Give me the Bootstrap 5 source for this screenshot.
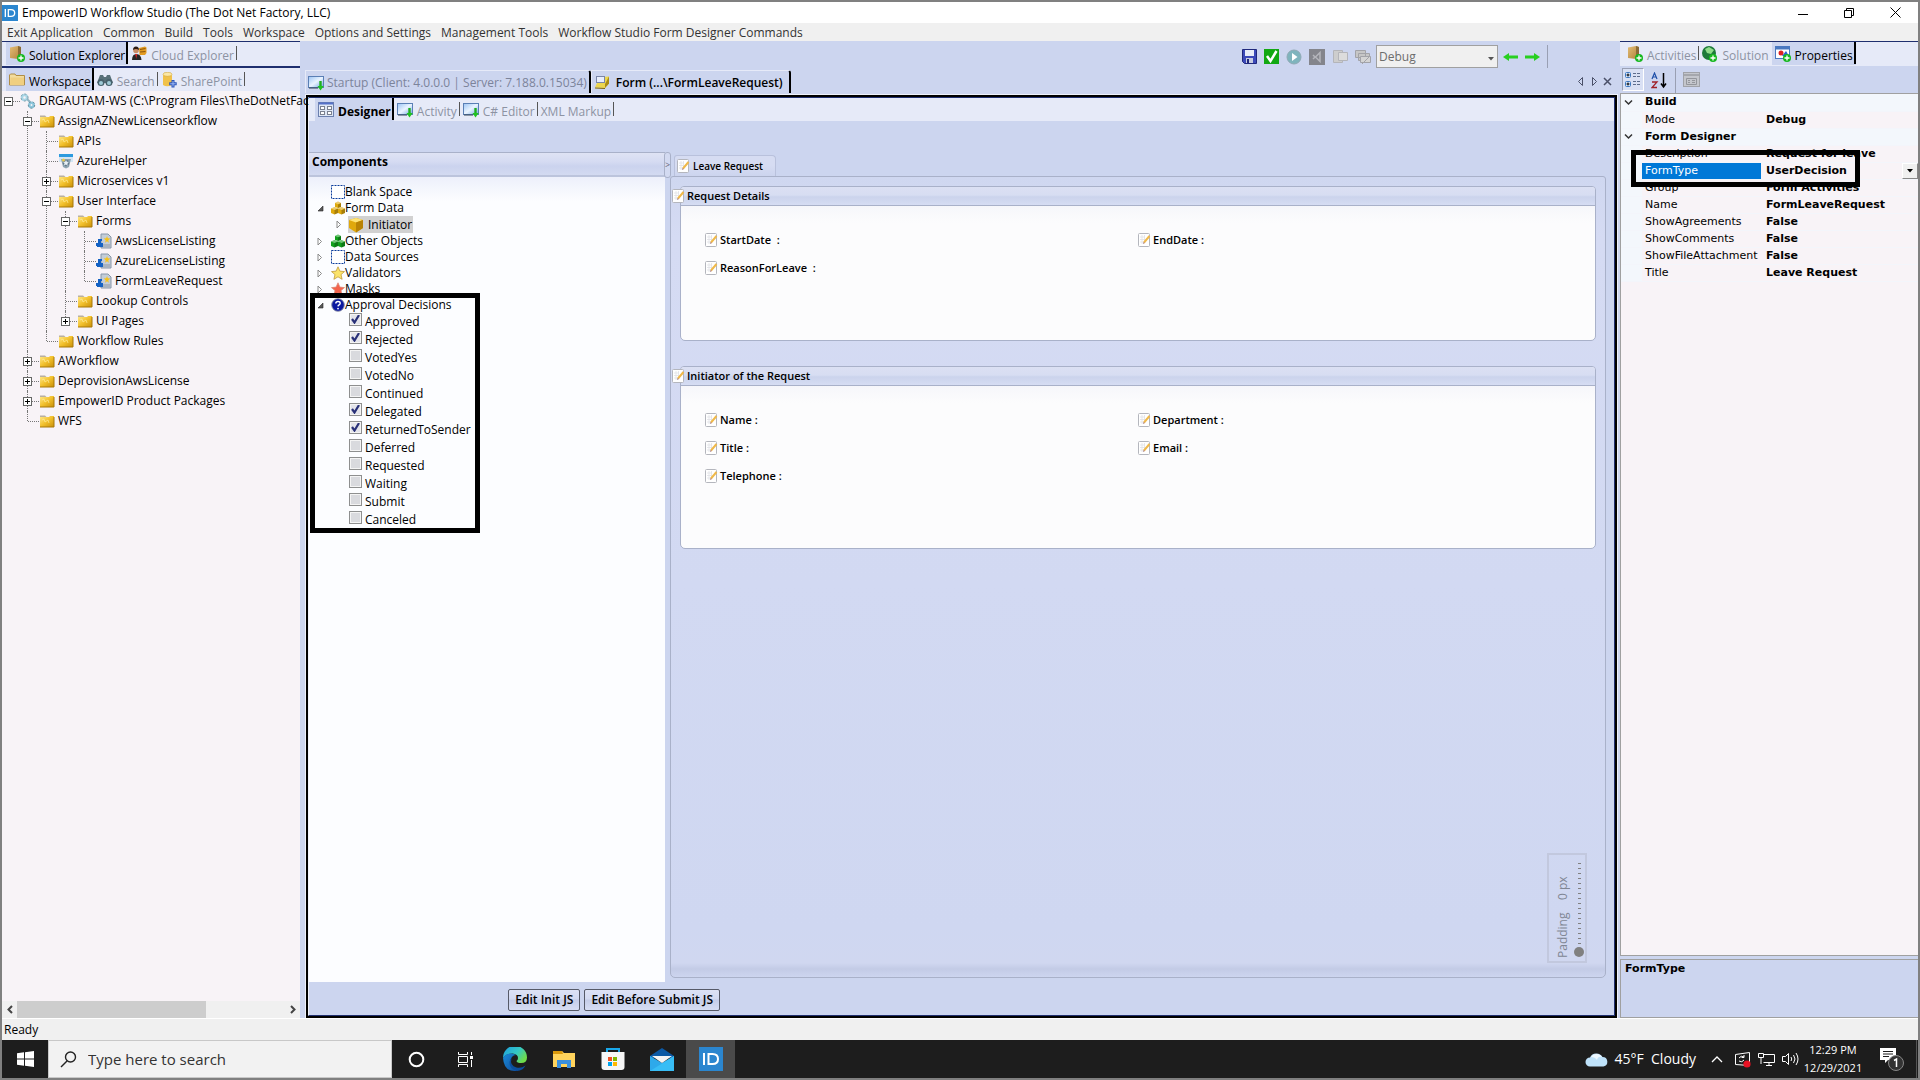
<!DOCTYPE html>
<html lang="en">
<head>
<meta charset="utf-8">
<meta name="viewport" content="width=device-width, initial-scale=1">
<title>EmpowerID Workflow Studio</title>
<link rel="stylesheet" href="https://cdn.jsdelivr.net/npm/bootstrap@5.3.0/dist/css/bootstrap.min.css">
<style>
:root{--face:#ccd5ef;--strip:#e6eaf8;--navy:#1f2f6f;--edge:#a9b1c9;--paper:#f8f3f7}
body{font:12px/16px "Open Sans","Noto Sans",sans-serif;color:#000;background:var(--face);border:2px solid #808080;overflow:hidden}
svg{display:block;flex:none}
a{color:inherit;text-decoration:none}
button{color:inherit}
.i16{width:16px;height:16px}
/* title and menu */
.titlebar{height:21px;background:#fff}
.winbtn{width:46px;height:18px;padding:0;border:0;background:none;display:flex;align-items:center;justify-content:center}
.menubar{height:18px;background:#f0f0f0;color:#333;gap:10px;padding:2px 5px 0}
.side{width:298px;flex:none}
/* tab strips */
.strip{height:25px;background:var(--strip);border-top:1px solid var(--navy);flex:none}
.strip.second{border-top-width:2px}
.strip a{display:flex;align-items:center;height:23px;padding:0 3px;gap:4px;color:#8d93a3;position:relative;white-space:nowrap}
.strip a::after{content:"";position:absolute;right:0;top:4px;height:14px;width:1px;background:#555}
.strip a.on{background:var(--face);color:#000}
.strip a.on::after{top:0;height:22px;width:2px;background:#000}
.strip a span{padding-top:4px}
.strip a.plain::after{display:none}
.strip.short{height:23px}
.strip.inset{padding-left:6px}
/* solution tree */
.tree{background:var(--paper)}
.tree ul{list-style:none;margin:0;padding:0}
.tree ul ul{padding-left:19px}
.tree li{position:relative;white-space:nowrap}
.tree ul ul>li::before{content:"";position:absolute;left:6px;top:0;bottom:0;border-left:1px dotted #777}
.tree ul ul>li:last-child::before{bottom:auto;height:10px}
.trow{display:flex;align-items:center;height:20px;gap:3px;padding-left:18px;position:relative}
.trow::before{content:"";position:absolute;left:7px;width:11px;top:10px;border-top:1px dotted #777}
.pm{position:absolute;left:2px;top:6px;width:9px;height:9px;border:1px solid #666;background:#fff;padding:0}
.pm::before,.pm.plus::after{content:"";position:absolute;left:1px;top:3px;width:5px;height:1px;background:#000}
.pm.plus::after{left:3px;top:1px;width:1px;height:5px}
.hscroll{height:17px;background:#f0f0f0;flex:none}
.hscroll .thumb{width:189px;background:#cdcdcd}
.hscroll .arr{width:15px;display:flex;align-items:center;justify-content:center}
/* tool row */
.toolrow{height:29px;padding:4px 72px 0 0;flex:none}
.tools{gap:7px}
.tb{border:0;background:none;padding:0;display:block}
.pick-cfg{margin:0 -2px}
.combo{width:122px;height:23px;border:1px solid #a0a0a0;border-radius:0;padding:0 2px;background:#f0f0f0;color:#6d6d6d;appearance:none;font:inherit}
.docs{height:23px;padding-left:5px;flex:none}
.docs .doc{display:flex;align-items:center;gap:3px;height:23px;border:1px solid var(--strip);border-bottom:0;border-right:2px solid #000;border-top-right-radius:3px;padding:2px 2px 0 2px;color:#7c849b;white-space:nowrap}
.docs .doc.on{color:#000;font-weight:600;gap:6px;padding-right:6px}
.frame{border:2px solid #000;box-shadow:0 0 0 1px #eef1fb;margin:2px 3px 0 6px;min-height:0}
.frame-in{border:1px solid var(--navy);border-left:1px solid #eef1fb;min-height:0}
.work{padding-top:31px}
.cmp-head{height:25px;border:1px solid var(--edge);border-width:1px 0;border-bottom:2px solid #bcc4dc;background:linear-gradient(#dfe3f4,#d5dbf2 40%,#cbd3ee 60%,#d3daf1);font-weight:700;padding:0 3px;line-height:17px}
.cmp{width:356px;flex:none}
.cmp-list{background:linear-gradient(#edf0fb,#fcfdff 24px);padding-top:7px;position:relative}
.crow{display:flex;align-items:center;height:16px;padding-left:8px;white-space:nowrap}
.crow .tw{width:14px;display:flex;align-items:center}
.crow.deep{height:17px;padding-left:27px}
.crow.deep .tw{width:12px}
.sel{background:#d1d1d1;gap:4px;display:flex;align-items:center;height:17px;padding-right:1px}
.ckrow{display:flex;height:18px;padding-left:40px;gap:3px;margin:0}
.ckrow .form-check-input{width:13px;height:13px;border:1px solid #8e8f8f;border-radius:0;margin:0;box-shadow:inset 0 0 0 1px #f4f4f4;background-color:#d9dade}
.ckrow .form-check-input:checked{background-color:#e3e4ea;border-color:#8e8f8f;background-size:11px 11px;background-image:url("data:image/svg+xml,%3Csvg xmlns='http://www.w3.org/2000/svg' viewBox='0 0 11 11'%3E%3Cpath d='M2 5l2.5 3.500L9 1' fill='none' stroke='%23283078' stroke-width='2.200'/%3E%3C/svg%3E")}
.ckrow label{padding-top:1px}
.marker{position:absolute;border:5px solid #000;pointer-events:none;z-index:3}
.mark-dec{left:1px;top:116px;width:170px;height:240px}
.splitter{width:7px;height:26px;margin:0 -1px;border:1px solid var(--edge);border-radius:3px;font-size:9px;line-height:24px;color:#667;background:#d3daf1}
/* form canvas */
.foot{width:411px;gap:4px;padding:7px 0 4px}
.btn-js{font:600 12px/20px "Open Sans",sans-serif;border:1px solid #565a68;border-radius:2px;padding:0 6px;height:22px;background:linear-gradient(#dde2f5,#d3daf1 45%,#c5cde8 50%,#d6ddf3);color:#000}
.formcol{padding-top:3px}
.ftab{height:21px;width:102px;margin-left:4px;border:1px solid #b9c1dc;border-bottom:0;border-radius:3px 4px 0 0;font-size:10px;font-weight:600;padding:0 2px;gap:3px;background:linear-gradient(#d6dcf2 45%,#ccd4ee)}
.canvas{border:1px solid var(--edge);border-radius:3px 3px 5px 5px;background:linear-gradient(#cfd7f0,#d5dbf3 60px,#cfd7f1 calc(100% - 50px),#d0d7f0 calc(100% - 14px),#c3cbe6 calc(100% - 8px),#cdd5ef);position:relative;padding:9px 9px 0 9px;margin-right:8px}
.gbox{border:1px solid var(--edge);border-radius:4px 4px 5px 5px;background:linear-gradient(#f0f1f8,#fcfcfd 36px)}
.gbox h2{font-size:11px;line-height:18px;font-weight:600;margin:0;height:19px;border-bottom:1px solid var(--edge);background:linear-gradient(#dbe0f3,#d7ddf2 45%,#cbd3ec 55%,#d6ddf3);border-radius:3px 3px 0 0;gap:2px}
.gbox h2 svg{margin-left:-9px}
.gbox .fields{padding:20px 24px 0;font-size:11px;font-weight:600}
.fld{height:28px;gap:2px;display:flex;align-items:center}
.g1{height:155px;margin-bottom:25px}
.g2{height:183px}
.pad{position:absolute;right:-17px;bottom:49px;width:110px;height:40px;border:2px solid #c2c8de;transform:rotate(-90deg);color:#808694;padding:6px 3px 0}
.pad input{appearance:none;display:block;width:96px;height:10px;margin:3px 0 0 1px;background:repeating-linear-gradient(90deg,transparent 0 3px,#808080 3px 4px,transparent 4px 5px) 0 4px/100% 3px no-repeat}
.pad input::-webkit-slider-thumb{appearance:none;width:10px;height:10px;border-radius:50%;background:#808080}
/* property grid */
.ptools{height:27px;padding:2px 2px 0;flex:none;gap:5px}
.ptools .tb{padding:3px 2px}
.ptools .tb.down{height:23px;border:1px solid #9aa0b4;border-right-color:#fff;border-bottom-color:#fff;background:#d9e0f4;padding:2px 1px}
.pgrid{background:var(--paper);border:1px solid #a0a0a0;border-right:0;position:relative;font:11px/16px "DejaVu Sans",sans-serif}
.pgrid table{width:100%;table-layout:fixed;border-collapse:collapse}
.pgrid th,.pgrid td{height:17px;padding:0 0 0 3px;border-bottom:1px solid #f3f5fb;white-space:nowrap;overflow:hidden;line-height:16px;font-weight:400}
.pgrid td{font-weight:700;font-size:11px;padding-left:5px}
.pgrid .gut,.pgrid .cat th{background:#f3f7fc}
.pgrid .cat th{font-weight:700}
.pgrid .pick th:nth-child(2){background:#0078d7;color:#fff}
.mark-type{left:10px;top:56px;width:229px;height:37px}
.dd{width:16px;height:16px;border:1px solid #fff;border-right-color:#888;border-bottom-color:#888;background:#f0f0f0;padding:0}
.pdesc{height:59px;border:1px solid #a0a0a0;border-right:0;margin-top:3px;font:700 11px/18px "DejaVu Sans",sans-serif;padding:0 4px;flex:none}
.status{height:22px;background:#f0f0f0;border-top:1px solid #fff;padding:3px 2px 0;flex:none}
/* taskbar */
.task{height:38px;background:#1d1d1d;color:#fff;flex:none}
.task button{border:0;background:none;padding:0;height:38px;width:49px;display:flex;align-items:center;justify-content:center}
.task .start{width:46px}
.task .cur{background:#4a4a4a}
.search{width:344px;background:#f2f2f2;border:1px solid #c8c8c8;gap:11px;padding-left:11px;color:#333}
.search input{border:0;background:none;font:15px/20px "Open Sans",sans-serif;width:250px;outline:0;padding:0}
.search input::placeholder{color:#333;opacity:1}
.tray{gap:7px}
.wx{font-size:14px;line-height:20px;margin-right:8px}
.clock{font-size:11px;line-height:18px;width:68px;text-align:center}
.edge-end{width:2px;border-left:1px solid #555}
</style>
</head>
<body class="vh-100 d-flex flex-column">
<svg width="0" height="0" class="position-absolute" aria-hidden="true">
<defs>
<linearGradient id="gy" x1="0" y1="0" x2="1" y2="1"><stop offset="0" stop-color="#ffe98a"/><stop offset=".5" stop-color="#f2c02c"/><stop offset="1" stop-color="#c98f08"/></linearGradient>
<linearGradient id="gb" x1="0" y1="0" x2="1" y2="1"><stop offset="0" stop-color="#9cc4f4"/><stop offset=".5" stop-color="#eaf4ff"/><stop offset="1" stop-color="#6fa5e4"/></linearGradient>
<linearGradient id="gt" x1="0" y1="0" x2="1" y2="1"><stop offset="0" stop-color="#e3bd75"/><stop offset="1" stop-color="#b0803a"/></linearGradient>
<linearGradient id="ge" x1="0" y1="0" x2="1" y2=".6"><stop offset="0" stop-color="#1c9ce0"/><stop offset=".6" stop-color="#35c8c4"/><stop offset="1" stop-color="#6fdc4a"/></linearGradient>
<linearGradient id="gd" x1="0" y1="0" x2="1" y2="1"><stop offset="0" stop-color="#1a8ad8"/><stop offset="1" stop-color="#0f4f9f"/></linearGradient>
<symbol id="folder" viewBox="0 0 16 16"><path d="M1 4V2.500h5L7.500 4" fill="#b9b0a0"/><path d="M1 4h9l1-1h4v11H1z" fill="url(#gy)"/><path d="M1 14h14V4" fill="none" stroke="#a87808"/><path d="M3 7l2-1 1 3 3-2 1 3" stroke="#fff0a8" fill="none" opacity=".6"/></symbol>
<symbol id="folder2" viewBox="0 0 16 16"><path d="M.5 3l1-1H6l1 1.500h8.500V13H.5z" fill="#f3dc9e" stroke="#b08d45"/><path d="M1 13l.5-7.500H15V13z" fill="#f0cf80"/></symbol>
<symbol id="plusg" viewBox="0 0 8 8"><circle cx="4" cy="4" r="4" fill="#17b81f"/><path d="M4 1.500v5M1.500 4h5" stroke="#fff" stroke-width="1.300"/></symbol>
<symbol id="boxplus" viewBox="0 0 16 16"><path d="M1 1.500L9 0l3 1v10l-3 2-8-1z" fill="url(#gt)"/><path d="M9 0l3 1v10l-3 2z" fill="#8a6a35"/><use href="#plusg" x="8" y="8" width="8" height="8"/></symbol>
<symbol id="cloudx" viewBox="0 0 16 16"><path d="M1 14q0-6 4.500-6t5 6z" fill="#262626"/><circle cx="5" cy="4.500" r="2.800" fill="#c98d66"/><path d="M2 4q0-3.500 3-3.500T8 4q-3-2-6 0z" fill="#2b1a10"/><path d="M4.200 8L5.200 13l1-5z" fill="#d22"/><path d="M8 2l6-1.500 1.500 1V7L14 9 8.500 9z" fill="#e39b22"/><path d="M9 3.500l5.500-1M9 6l5.500-.5" stroke="#8c560c"/></symbol>
<symbol id="binoc" viewBox="0 0 16 16"><path d="M3 3h3l1 2h2l1-2h3l3 8H0z" fill="#587078"/><circle cx="4" cy="10.500" r="3.500" fill="#46616c"/><circle cx="12" cy="10.500" r="3.500" fill="#46616c"/><circle cx="4" cy="11" r="2" fill="#9fcbd8"/><circle cx="12" cy="11" r="2" fill="#9fcbd8"/></symbol>
<symbol id="share" viewBox="0 0 16 16"><path d="M2 2v11q4 2.500 9 0V2" fill="#f0c14a"/><ellipse cx="6.500" cy="2.300" rx="4.500" ry="2" fill="#fbe7a6" stroke="#c99a2a" stroke-width=".5"/><path d="M12 8v7.500M8.200 11.800h7.500" stroke="#2a55b8" stroke-width="3"/><path d="M12 9v5.500M9.200 11.800h5.500" stroke="#9db9f5"/></symbol>
<symbol id="gears" viewBox="0 0 16 16"><circle cx="4.500" cy="4.500" r="2.500" fill="none" stroke="#a9d6e6" stroke-width="2.500"/><circle cx="4.500" cy="4.500" r="3.500" fill="none" stroke="#7f9aa6" stroke-dasharray="2 2"/><path d="M7 6l3 3" stroke="#8fb4c2" stroke-width="2"/><circle cx="11.500" cy="12" r="2.200" fill="none" stroke="#8cc6dc" stroke-width="2.500"/><circle cx="11.500" cy="12" r="3.200" fill="none" stroke="#6b8b98" stroke-dasharray="2 2"/></symbol>
<symbol id="helper" viewBox="0 0 16 16"><path d="M1 1h14v8H1z" fill="#d3e5f4"/><path d="M1 1h14v3H1z" fill="#2d9ade"/><path d="M3 6h10l-2 8-3 1.500L5 14z" fill="#8ea4b2"/><circle cx="8" cy="10" r="2.500" fill="#e8f0f5" stroke="#63798a" stroke-width="1.500" stroke-dasharray="2 1"/><circle cx="5.500" cy="7" r="1.500" fill="#e8c84a"/></symbol>
<symbol id="formi" viewBox="0 0 16 16"><path d="M5 1h7l3 3v11H5z" fill="#c3cdd8" stroke="#8896a8"/><path d="M7 11h7v3H7z" fill="#a9b3bf"/><path d="M11 3l.8 2.300 2.500.2-2 1.700.6 2.500L11 8.300 9 9.700l.7-2.500-2-1.700 2.500-.2z" fill="#f6c21a"/><path d="M2 6h4v2H5v2h2v4H1v-1H0v-3h2z" fill="#1462c4"/></symbol>
<symbol id="win" viewBox="0 0 16 16"><rect x=".5" y="1.500" width="15" height="11" fill="url(#gb)" stroke="#5a7fb5"/><path d="M1 13h9" stroke="#345"/><path d="M12.500 6v6" stroke="#1fae1f" stroke-width="2.400"/><path d="M9.500 11h6.200L12.500 15.500z" fill="#1fc41f"/></symbol>
<symbol id="grid4" viewBox="0 0 16 16"><rect x=".5" y=".5" width="15" height="14" fill="#dfe7f5" stroke="#6b7fae"/><path d="M1 1.500h14" stroke="#5571c9" stroke-width="2"/><g fill="#fff" stroke="#7b8190"><rect x="2.500" y="4.500" width="4" height="3"/><rect x="9.500" y="4.500" width="4" height="3"/><rect x="2.500" y="9.500" width="4" height="3"/><rect x="9.500" y="9.500" width="4" height="3"/></g></symbol>
<symbol id="formy" viewBox="0 0 16 16"><path d="M8 2l7-.5v7L11 13 1 12.500 3 8z" fill="#ecd64e"/><path d="M15 1.500v7L11 13V9z" fill="#a98c15"/><path d="M1 12.500L11 13v1L1 13.500z" fill="#7f680c"/><rect x="2.500" y="1.500" width="8" height="6" fill="#e8eefc" stroke="#7a86a8"/></symbol>
<symbol id="note" viewBox="0 0 13 15"><rect x=".5" y=".5" width="11" height="13" rx="1" fill="#fff" stroke="#b4b6bd"/><path d="M2 4h5M2 6.500h5M2 9h4M4 2v9M6.500 2v8" stroke="#dfe1e6" stroke-width=".8"/><path d="M6 9.500L11.500 3" stroke="#f0b94a" stroke-width="2"/><path d="M5 11l.5-2L7 10z" fill="#a77"/></symbol>
<symbol id="dash" viewBox="0 0 14 14"><rect x=".5" y=".5" width="13" height="13" fill="#fff" stroke="#0b3c9b" stroke-dasharray="2 1"/></symbol>
<symbol id="cubes" viewBox="0 0 14 14"><path d="M4 2l3-1.500L10 2v4L7 7 4 6z"/><path d="M0 7.500L3.500 6 7 7.500v4.500l-3.500 1.500L0 12z"/><path d="M7 7.500L10.500 6 14 7.500v4.500l-3.500 1.500L7 12z"/><path d="M7 3.500l3-1.500v4L7 7zM3.500 9L7 7.500V12l-3.500 1.500zM10.500 9L14 7.500V12l-3.500 1.500z" fill="#000" fill-opacity=".25"/><path d="M4 2l3-1.500L10 2 7 3.300zM0 7.500L3.500 6 7 7.500 3.500 9zM7 7.500L10.500 6 14 7.500 10.500 9z" fill="#fff" fill-opacity=".4"/></symbol>
<symbol id="cube" viewBox="0 0 16 16"><path d="M8 1l7 2v8l-7 4.500L1 11V3z" fill="#e0a80c"/><path d="M8 1l7 2-7 2.500L1 3z" fill="#ffe376"/><path d="M8 5.500V15.500L15 11V3z" fill="#b98305"/></symbol>
<symbol id="star" viewBox="0 0 14 14"><path d="M7 .8l1.900 4.300 4.600.5L10 8.600l1.100 4.700L7 10.800l-4.100 2.500L4 8.600.5 5.600l4.600-.5z"/></symbol>
<symbol id="q" viewBox="0 0 16 16"><circle cx="8" cy="8" r="7.200" fill="#0a18a0" stroke="#8a8fa5"/><path d="M5.500 6.200q0-2.200 2.500-2.200t2.500 2q0 1.200-1.200 1.800T8 9.500" fill="none" stroke="#fff" stroke-width="1.600"/><circle cx="8" cy="12" r="1" fill="#fff"/></symbol>
<symbol id="open" viewBox="0 0 7 7"><path d="M6 1v5H1z" fill="#595959" stroke="#262626" stroke-width=".6"/></symbol>
<symbol id="shut" viewBox="0 0 7 9"><path d="M1 1v7l3.500-3.500z" fill="#fff" stroke="#8a8a8a"/></symbol>
<symbol id="idl" viewBox="0 0 24 24"><rect width="24" height="24" fill="#2b86cf"/><path d="M5 6v12M9.500 7h4q5.500 0 5.500 5t-5.500 5h-4z" fill="none" stroke="#fff" stroke-width="2"/></symbol>
</defs></svg>

<header class="titlebar d-flex align-items-center flex-shrink-0">
  <svg class="i16"><use href="#idl"/></svg><span class="ps-1 me-auto">EmpowerID Workflow Studio (The Dot Net Factory, LLC)</span>
  <button class="winbtn" aria-label="Minimize"><svg width="10" height="10"><path d="M0 6.500h10" stroke="#000"/></svg></button>
  <button class="winbtn" aria-label="Restore"><svg width="10" height="10" fill="none" stroke="#000"><path d="M.5 2.500h7v7h-7zM2.500 2V.5h7v7H8"/></svg></button>
  <button class="winbtn" aria-label="Close"><svg width="11" height="11" stroke="#000"><path d="M.5.5l10 10M10.500.5l-10 10"/></svg></button>
</header>
<nav class="menubar d-flex align-items-center flex-shrink-0">
  <a href="#">Exit Application</a><a href="#">Common</a><a href="#">Build</a><a href="#">Tools</a><a href="#">Workspace</a><a href="#">Options and Settings</a><a href="#">Management Tools</a><a href="#">Workflow Studio Form Designer Commands</a>
</nav>

<div class="d-flex flex-grow-1 overflow-hidden">
<aside class="side d-flex flex-column">
  <nav class="strip d-flex ps-1"><a class="on" href="#"><svg class="i16"><use href="#boxplus"/></svg><span>Solution Explorer</span></a><a href="#"><svg class="i16"><use href="#cloudx"/></svg><span>Cloud Explorer</span></a></nav>
  <nav class="strip second d-flex ps-1"><a class="on" href="#"><svg class="i16"><use href="#folder2"/></svg><span>Workspace</span></a><a href="#"><svg class="i16"><use href="#binoc"/></svg><span>Search</span></a><a href="#"><svg class="i16"><use href="#share"/></svg><span>SharePoint</span></a></nav>
  <div class="tree flex-grow-1">
  <ul><li><div class="trow"><button class="pm" aria-label="Collapse"></button><svg class="i16"><use href="#gears"/></svg>DRGAUTAM-WS (C:\Program Files\TheDotNetFac</div>
    <ul>
      <li><div class="trow"><button class="pm" aria-label="Collapse"></button><svg class="i16"><use href="#folder"/></svg>AssignAZNewLicenseorkflow</div>
        <ul>
          <li><div class="trow"><svg class="i16"><use href="#folder"/></svg>APIs</div></li>
          <li><div class="trow"><svg class="i16"><use href="#helper"/></svg>AzureHelper</div></li>
          <li><div class="trow"><button class="pm plus" aria-label="Expand"></button><svg class="i16"><use href="#folder"/></svg>Microservices v1</div></li>
          <li><div class="trow"><button class="pm" aria-label="Collapse"></button><svg class="i16"><use href="#folder"/></svg>User Interface</div>
            <ul>
              <li><div class="trow"><button class="pm" aria-label="Collapse"></button><svg class="i16"><use href="#folder"/></svg>Forms</div>
                <ul>
                  <li><div class="trow"><svg class="i16"><use href="#formi"/></svg>AwsLicenseListing</div></li>
                  <li><div class="trow"><svg class="i16"><use href="#formi"/></svg>AzureLicenseListing</div></li>
                  <li><div class="trow"><svg class="i16"><use href="#formi"/></svg>FormLeaveRequest</div></li>
                </ul></li>
              <li><div class="trow"><svg class="i16"><use href="#folder"/></svg>Lookup Controls</div></li>
              <li><div class="trow"><button class="pm plus" aria-label="Expand"></button><svg class="i16"><use href="#folder"/></svg>UI Pages</div></li>
            </ul></li>
          <li><div class="trow"><svg class="i16"><use href="#folder"/></svg>Workflow Rules</div></li>
        </ul></li>
      <li><div class="trow"><button class="pm plus" aria-label="Expand"></button><svg class="i16"><use href="#folder"/></svg>AWorkflow</div></li>
      <li><div class="trow"><button class="pm plus" aria-label="Expand"></button><svg class="i16"><use href="#folder"/></svg>DeprovisionAwsLicense</div></li>
      <li><div class="trow"><button class="pm plus" aria-label="Expand"></button><svg class="i16"><use href="#folder"/></svg>EmpowerID Product Packages</div></li>
      <li><div class="trow"><svg class="i16"><use href="#folder"/></svg>WFS</div></li>
    </ul></li></ul>
  </div>
  <div class="hscroll d-flex"><span class="arr"><svg width="6" height="9" fill="none" stroke="#444" stroke-width="2"><path d="M5 1L1.500 4.500 5 8"/></svg></span><div class="thumb"></div><span class="arr ms-auto"><svg width="6" height="9" fill="none" stroke="#444" stroke-width="2"><path d="M1 1l3.500 3.500L1 8"/></svg></span></div>
</aside>

<main class="d-flex flex-column flex-grow-1">
  <div class="toolrow d-flex justify-content-end align-items-start">
    <div class="tools d-flex align-items-center">
      <button class="tb" aria-label="Save"><svg width="15" height="15"><path d="M.5.5h14v14h-12l-2-2z" fill="#3c49b8" stroke="#20287c"/><rect x="3" y="1" width="9" height="6" fill="#e8ecf8"/><rect x="4" y="9" width="7" height="5" fill="#c8cce0"/><rect x="5" y="10" width="2" height="4" fill="#20287c"/></svg></button>
      <button class="tb" aria-label="Validate"><svg width="15" height="15"><rect width="15" height="15" fill="#12a812"/><path d="M3 7l3.500 5L12.500 2" fill="none" stroke="#fff" stroke-width="2.500"/></svg></button>
      <button class="tb" aria-label="Run"><svg width="16" height="16"><circle cx="8" cy="8" r="7" fill="#7fb4bd" stroke="#8fa9b4"/><path d="M6 4l5.500 4L6 12z" fill="#fff"/></svg></button>
      <button class="tb" aria-label="Visual Studio"><svg width="16" height="16"><rect width="16" height="16" fill="#84858c"/><path d="M4 6l2 2-2 2M11 3.500v9L6.500 8z" fill="none" stroke="#b4b5bb" stroke-width="1.500"/></svg></button>
      <button class="tb" aria-label="Copy"><svg width="16" height="16" fill="#cdcdcd" stroke="#b4b5ba"><path d="M1.500 1.500h9v12h-9z"/><path d="M6.500 3.500h9v8h-9z" fill="#dcdcdc"/></svg></button>
      <button class="tb" aria-label="Windows"><svg width="16" height="16" fill="#c6c6c6" stroke="#a2a3a8"><path d="M.5 1.500h10v7H.5zM3.500 4.500h11v7h-11z"/><path d="M5.500 7.500h10v6h-10z" fill="#d4d4d4"/><path d="M7 15l7-7"/></svg></button>
      <div class="pick-cfg position-relative"><select class="combo" aria-label="Build configuration"><option>Debug</option></select><svg class="position-absolute top-50 end-0 me-1" width="6" height="4"><path d="M0 0h6L3 3.500z" fill="#555"/></svg></div>
      <button class="tb" aria-label="Back"><svg width="15" height="12"><path d="M15 4.500H6V2L0 6l6 4V7.500h9z" fill="#27cf20"/></svg></button>
      <button class="tb" aria-label="Forward"><svg width="15" height="12"><path d="M0 4.500h9V2l6 4-6 4V7.500H0z" fill="#27cf20"/></svg></button>
      <span class="vr"></span>
    </div>
  </div>
  <div class="docs d-flex">
    <a class="doc" href="#"><svg class="i16"><use href="#win"/></svg>Startup (Client: 4.0.0.0 | Server: 7.188.0.15034)</a>
    <a class="doc on" href="#"><svg class="i16"><use href="#formy"/></svg>Form (...\FormLeaveRequest)</a>
    <svg class="ms-auto me-2 mt-1" width="34" height="14" fill="none" stroke="#4a5068"><path d="M4.500 3.500v8l-4-4zM14.500 3.500v8l4-4z"/><path d="M26 4l7 7M33 4l-7 7" stroke-width="1.500"/></svg>
  </div>
  <div class="frame d-flex flex-column flex-grow-1"><div class="frame-in d-flex flex-column flex-grow-1">
    <nav class="strip short inset d-flex border-0"><a class="on fw-bold" href="#"><svg class="i16"><use href="#grid4"/></svg><span>Designer</span></a><a href="#"><svg class="i16"><use href="#win"/></svg><span>Activity</span></a><a href="#"><svg class="i16"><use href="#win"/></svg><span>C# Editor</span></a><a href="#"><span>XML Markup</span></a></nav>
    <div class="work d-flex flex-grow-1 overflow-hidden">
      <section class="cmp d-flex flex-column">
        <div class="cmp-head">Components</div>
        <div class="cmp-list flex-grow-1">
          <div class="crow"><span class="tw"></span><svg width="14" height="14"><use href="#dash"/></svg>Blank Space</div>
          <div class="crow"><span class="tw"><svg width="7" height="7"><use href="#open"/></svg></span><svg width="14" height="14" fill="#dfa90c"><use href="#cubes"/></svg>Form Data</div>
          <div class="crow deep"><span class="tw"><svg width="7" height="9"><use href="#shut"/></svg></span><span class="sel"><svg class="i16"><use href="#cube"/></svg>Initiator</span></div>
          <div class="crow"><span class="tw"><svg width="7" height="9"><use href="#shut"/></svg></span><svg width="14" height="14" fill="#12a01c"><use href="#cubes"/></svg>Other Objects</div>
          <div class="crow"><span class="tw"><svg width="7" height="9"><use href="#shut"/></svg></span><svg width="14" height="14"><use href="#dash"/></svg>Data Sources</div>
          <div class="crow"><span class="tw"><svg width="7" height="9"><use href="#shut"/></svg></span><svg width="14" height="14" fill="#fbe36a" stroke="#c09a3a" stroke-width=".8"><use href="#star"/></svg>Validators</div>
          <div class="crow"><span class="tw"><svg width="7" height="9"><use href="#shut"/></svg></span><svg width="14" height="14" fill="#f5634c" stroke="#d98a78" stroke-width=".8"><use href="#star"/></svg>Masks</div>
          <div class="crow"><span class="tw"><svg width="7" height="7"><use href="#open"/></svg></span><svg width="14" height="14"><use href="#q"/></svg>Approval Decisions</div>
          <div class="ckrow"><input class="form-check-input" type="checkbox" id="c1" checked><label for="c1">Approved</label></div>
          <div class="ckrow"><input class="form-check-input" type="checkbox" id="c2" checked><label for="c2">Rejected</label></div>
          <div class="ckrow"><input class="form-check-input" type="checkbox" id="c3"><label for="c3">VotedYes</label></div>
          <div class="ckrow"><input class="form-check-input" type="checkbox" id="c4"><label for="c4">VotedNo</label></div>
          <div class="ckrow"><input class="form-check-input" type="checkbox" id="c5"><label for="c5">Continued</label></div>
          <div class="ckrow"><input class="form-check-input" type="checkbox" id="c6" checked><label for="c6">Delegated</label></div>
          <div class="ckrow"><input class="form-check-input" type="checkbox" id="c7" checked><label for="c7">ReturnedToSender</label></div>
          <div class="ckrow"><input class="form-check-input" type="checkbox" id="c8"><label for="c8">Deferred</label></div>
          <div class="ckrow"><input class="form-check-input" type="checkbox" id="c9"><label for="c9">Requested</label></div>
          <div class="ckrow"><input class="form-check-input" type="checkbox" id="c10"><label for="c10">Waiting</label></div>
          <div class="ckrow"><input class="form-check-input" type="checkbox" id="c11"><label for="c11">Submit</label></div>
          <div class="ckrow"><input class="form-check-input" type="checkbox" id="c12"><label for="c12">Canceled</label></div>
          <div class="marker mark-dec"></div>
        </div>
      </section>
      <div class="splitter flex-shrink-0">&gt;</div>
      <section class="formcol d-flex flex-column flex-grow-1">
        <div class="ftab d-flex align-items-center"><svg width="13" height="15"><use href="#note"/></svg>Leave Request</div>
        <div class="canvas flex-grow-1 mb-1">
          <div class="gbox g1"><h2 class="d-flex align-items-center"><svg width="13" height="15"><use href="#note"/></svg>Request Details</h2>
            <div class="fields row g-0">
              <div class="col-6"><div class="fld"><svg width="13" height="15"><use href="#note"/></svg>StartDate &nbsp;:</div><div class="fld"><svg width="13" height="15"><use href="#note"/></svg>ReasonForLeave &nbsp;:</div></div>
              <div class="col-6"><div class="fld"><svg width="13" height="15"><use href="#note"/></svg>EndDate :</div></div>
            </div></div>
          <div class="gbox g2"><h2 class="d-flex align-items-center"><svg width="13" height="15"><use href="#note"/></svg>Initiator of the Request</h2>
            <div class="fields row g-0">
              <div class="col-6"><div class="fld"><svg width="13" height="15"><use href="#note"/></svg>Name :</div><div class="fld"><svg width="13" height="15"><use href="#note"/></svg>Title :</div><div class="fld"><svg width="13" height="15"><use href="#note"/></svg>Telephone :</div></div>
              <div class="col-6"><div class="fld"><svg width="13" height="15"><use href="#note"/></svg>Department :</div><div class="fld"><svg width="13" height="15"><use href="#note"/></svg>Email :</div></div>
            </div></div>
          <div class="pad"><label for="padding">Padding &nbsp;&nbsp; 0 px</label><input id="padding" type="range" min="0" max="20" value="0"></div>
        </div>
      </section>
    </div>
    <div class="foot d-flex justify-content-end"><button class="btn-js">Edit Init JS</button><button class="btn-js">Edit Before Submit JS</button></div>
  </div></div>
</main>

<aside class="side d-flex flex-column">
  <nav class="strip d-flex ps-1"><a href="#"><svg class="i16"><use href="#boxplus"/></svg><span>Activities</span></a><a class="plain" href="#"><svg class="i16"><circle cx="7" cy="7" r="7" fill="#1d7a3a"/><path d="M3 3l4-2 5 3-3 4-4-1z" fill="#8fdc8a"/><use href="#plusg" x="7" y="8" width="8" height="8"/></svg><span>Solution</span></a><a class="on" href="#"><svg class="i16"><rect x=".5" y=".5" width="14" height="12" fill="#fff" stroke="#4a78c0"/><path d="M1 2h14" stroke="#4a78c0" stroke-width="3"/><circle cx="6" cy="7" r="2.500" fill="#d22"/><path d="M7 10l4-5 3 5z" fill="#2a5fd0"/><use href="#plusg" x="8" y="8" width="8" height="8"/></svg><span>Properties</span></a></nav>
  <div class="ptools d-flex">
    <button class="tb down" aria-label="Categorized"><svg width="18" height="17"><g fill="#d8e8ff" stroke="#3d78c0"><rect x="1.500" y="1.500" width="5" height="5" rx="1"/><rect x="1.500" y="10.500" width="5" height="5" rx="1"/></g><path d="M2.500 4h3M4 2.500v3M2.500 13h3M4 11.500v3" stroke="#000"/><path d="M9 2.500h8M9 5.500h8M9 10.500h8M9 13.500h8" stroke="#5d6c8c" stroke-dasharray="3 1"/></svg></button>
    <button class="tb" aria-label="Alphabetical"><svg width="17" height="17" fill="none"><path d="M1 7L3.500 1 6 7M2 5h3" stroke="#1f4fa8" stroke-width="1.200"/><path d="M1 10h5L1 15.500h5" stroke="#a02028" stroke-width="1.300"/><path d="M12.500 1v13M10 11.500l2.500 3.500 2.500-3.500" stroke="#000" stroke-width="1.500"/></svg></button>
    <span class="vr"></span>
    <button class="tb" aria-label="Property pages"><svg width="17" height="17"><rect x=".5" y=".5" width="16" height="14" fill="#c4c6cc" stroke="#a0a2a8"/><path d="M1 3h15" stroke="#a5a7ad" stroke-width="2"/><path d="M3.500 6.500h10v6h-10zM5 8.500h2m2 0h3m-7 2h2m2 0h3" fill="none" stroke="#94969c"/></svg></button>
  </div>
  <div class="pgrid flex-grow-1">
    <table>
      <colgroup><col style="width:21px"><col style="width:119px"><col></colgroup>
      <tr class="cat"><th class="gut"><svg width="9" height="7" fill="none" stroke="#333" stroke-width="1.500"><path d="M1 1.500L4.500 5 8 1.500"/></svg></th><th colspan="2">Build</th></tr>
      <tr><th class="gut"></th><th>Mode</th><td>Debug</td></tr>
      <tr class="cat"><th class="gut"><svg width="9" height="7" fill="none" stroke="#333" stroke-width="1.500"><path d="M1 1.500L4.500 5 8 1.500"/></svg></th><th colspan="2">Form Designer</th></tr>
      <tr><th class="gut"></th><th>Description</th><td>Request for leave</td></tr>
      <tr class="pick"><th class="gut"></th><th>FormType</th><td><div class="d-flex justify-content-between">UserDecision<button class="dd d-flex align-items-center justify-content-center" aria-label="Choose form type"><svg width="6" height="4"><path d="M0 0h6L3 3.500z"/></svg></button></div></td></tr>
      <tr><th class="gut"></th><th>Group</th><td>Form Activities</td></tr>
      <tr><th class="gut"></th><th>Name</th><td>FormLeaveRequest</td></tr>
      <tr><th class="gut"></th><th>ShowAgreements</th><td>False</td></tr>
      <tr><th class="gut"></th><th>ShowComments</th><td>False</td></tr>
      <tr><th class="gut"></th><th>ShowFileAttachment</th><td>False</td></tr>
      <tr><th class="gut"></th><th>Title</th><td>Leave Request</td></tr>
    </table>
    <div class="marker mark-type"></div>
  </div>
  <div class="pdesc">FormType</div>
</aside>
</div>

<div class="status">Ready</div>
<footer class="task d-flex align-items-center">
  <button aria-label="Start" class="start"><svg width="17" height="16" fill="#fff"><path d="M0 2.300L7 1.300V7.500H0zM8 1.200L17 0v7.500H8zM0 8.500h7v6.200L0 13.700zM8 8.500h9V16l-9-1.200z"/></svg></button>
  <div class="search d-flex align-items-center h-100"><svg width="17" height="17" fill="none" stroke="#222" stroke-width="1.400"><circle cx="10.500" cy="6" r="5"/><path d="M7 10L1 16"/></svg><input type="text" placeholder="Type here to search" aria-label="Type here to search"></div>
  <button aria-label="Cortana"><svg width="17" height="17"><circle cx="8.500" cy="8.500" r="6.800" fill="none" stroke="#fff" stroke-width="2"/></svg></button>
  <button aria-label="Task view"><svg width="17" height="17" fill="none" stroke="#fff"><path d="M1.500 1v2.500h9V1M1.500 16v-2.500h9V16M1.500 5.500h9v6h-9zM14.500 1v3M14.500 9v7"/><path d="M13 6.500h3" stroke-width="3"/></svg></button>
  <button aria-label="Edge"><svg width="24" height="24"><path d="M0 11A12 12 0 0 1 24 10.500q0 5.500-6 5.500-4 0-4.500-2 1.500-1 1.500-3 0-4-5.500-4.500Q2.500 6.500 0 11z" fill="url(#ge)"/><path d="M0 11q2.500-4.500 8-4.500 3 0 5 1.500-5 .5-5.500 6Q7.500 21 14 23.800 1 25.500 0 11z" fill="url(#gd)"/><path d="M8.500 11q-2 8 5 9.500 5 1 9-2Q20 23.500 14 24 6 21.500 6.500 15q.3-3 2-4z" fill="#0c4e9e"/></svg></button>
  <button aria-label="File Explorer"><svg width="22" height="19"><path d="M0 1h9l2 2h11v14H0z" fill="#ffd35c"/><path d="M0 1h9l1 3H0z" fill="#d9980c"/><path d="M4 18v-8h14v8h-4v-4H8v4z" fill="#3a8fdc"/></svg></button>
  <button aria-label="Store"><svg width="24" height="24"><path d="M6 7V2h12v5" fill="none" stroke="#19a8ea" stroke-width="2"/><path d="M.5 5h23v15q0 3-3 3h-17q-3 0-3-3z" fill="#f6f6f6"/><path d="M7 10h4v4H7z" fill="#f25022"/><path d="M12 10h4v4h-4z" fill="#7fba00"/><path d="M7 15h4v4H7z" fill="#00a4ef"/><path d="M12 15h4v4h-4z" fill="#ffb900"/></svg></button>
  <button aria-label="Mail"><svg width="24" height="23"><path d="M0 8l12-8 12 8v2H0z" fill="#0c59a4"/><path d="M0 8l12 7L24 8v15H0z" fill="#2ea9ea"/><path d="M0 23L24 8v15z" fill="#38bdf5"/><path d="M2 8h20l-10 7z" fill="#f4f4f4"/></svg></button>
  <button aria-label="EmpowerID" class="cur"><svg width="24" height="24"><use href="#idl"/></svg></button>
  <div class="d-flex align-items-center ms-auto h-100">
    <div class="tray d-flex align-items-center">
    <svg width="23" height="16"><path d="M5 15.500a4.500 4.500 0 0 1 0-9A7 7 0 0 1 17.500 6a4.800 4.800 0 0 1 1 9.500z" fill="#bfe2fa"/><path d="M6 6a6.500 6.500 0 0 1 11 0q-4-1-5 3-2-3-6-3z" fill="#eef8ff"/></svg>
    <span class="wx">45°F &nbsp;Cloudy</span>
    <svg class="me-1" width="12" height="8" fill="none" stroke="#fff" stroke-width="1.300"><path d="M1 7l5-5 5 5"/></svg>
    <svg width="17" height="17" fill="none" stroke="#fff"><path d="M1.500 3.500l14-2v13l-14-1z"/><path d="M5 7q2-3 5-1M5 10q3 2 5-1M10 4v2.500H7.500"/><circle cx="13" cy="13" r="3.600" fill="#e81123" stroke="none"/></svg>
    <svg width="17" height="15" fill="none" stroke="#fff"><path d="M5.500 2.500h11v8h-11M8 13.500h6M11 11v2M.5 1.500h5v4h-5zM3 6v6"/></svg>
    <svg width="17" height="14" fill="none" stroke="#fff"><path d="M.5 4.500h3l3-3v11l-3-3h-3zM9 5q1.500 2 0 4M11.500 3q3 4 0 8M14 1q4 6 0 12"/></svg>
    </div>
    <div class="clock">12:29 PM<br>12/29/2021</div>
    <button aria-label="Notifications"><svg width="24" height="24"><path d="M0 1h16v12H8l-3 3v-3H0z" fill="#fff"/><path d="M3 4.500h10M3 7h10M3 9.500h6" stroke="#1d1d1d"/><circle cx="16" cy="16" r="7.500" fill="#333" stroke="#888"/><path d="M14 13.500l2.500-1.500v8" fill="none" stroke="#fff" stroke-width="1.500"/></svg></button>
    <span class="edge-end h-100"></span>
  </div>
</footer>
<script src="https://cdn.jsdelivr.net/npm/bootstrap@5.3.0/dist/js/bootstrap.bundle.min.js"></script>
</body>
</html>
